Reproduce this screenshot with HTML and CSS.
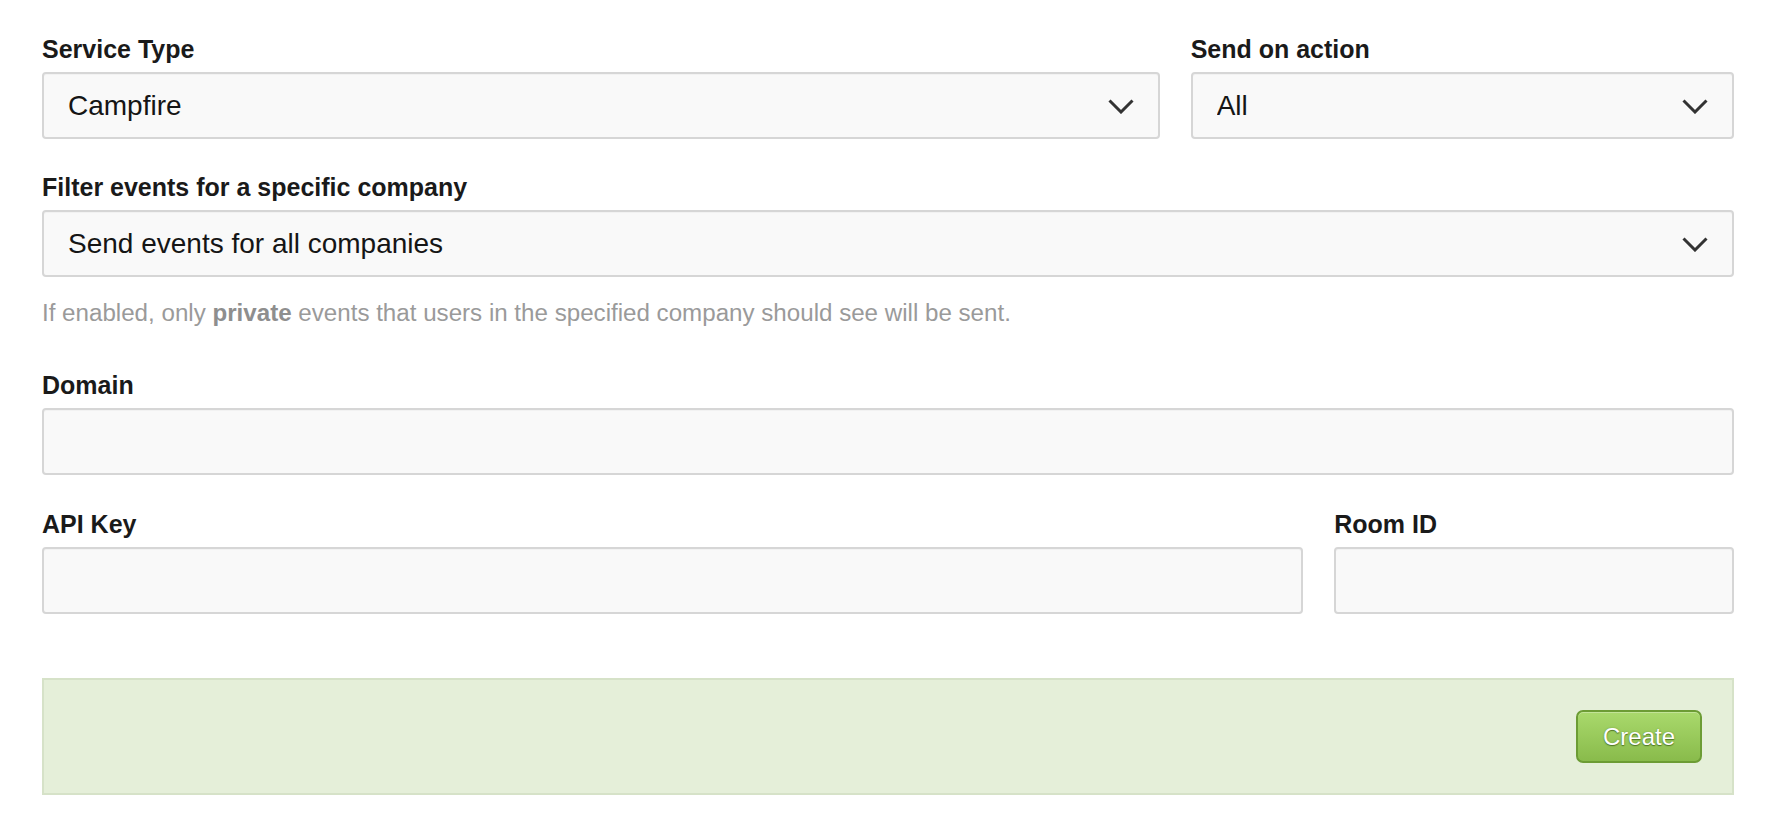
FILE: index.html
```html
<!DOCTYPE html>
<html lang="en">
<head>
    <meta charset="UTF-8">
    <meta name="viewport" content="width=device-width, initial-scale=1.0">
    <title>New Service Hook</title>
    <link rel="stylesheet" href="styles.css">
</head>
<body>
    <form class="service-form" action="#" method="post">
        <div class="row">
            <div class="field col-8">
                <label for="service-type">Service Type</label>
                <div class="select-wrap">
                    <select id="service-type" name="service-type">
                        <option>Campfire</option>
                    </select>
                    <svg class="chevron" viewBox="0 0 26 15"><path d="M1.5 1.5 L13 13 L24.5 1.5"/></svg>
                </div>
            </div>
            <div class="field col-4">
                <label for="send-on">Send on action</label>
                <div class="select-wrap">
                    <select id="send-on" name="send-on">
                        <option>All</option>
                    </select>
                    <svg class="chevron" viewBox="0 0 26 15"><path d="M1.5 1.5 L13 13 L24.5 1.5"/></svg>
                </div>
            </div>
        </div>

        <div class="field filter">
            <label for="company">Filter events for a specific company</label>
            <div class="select-wrap">
                <select id="company" name="company">
                    <option>Send events for all companies</option>
                </select>
                <svg class="chevron" viewBox="0 0 26 15"><path d="M1.5 1.5 L13 13 L24.5 1.5"/></svg>
            </div>
            <p class="help">If enabled, only <strong>private</strong> events that users in the specified company should see will be sent.</p>
        </div>

        <div class="field domain">
            <label for="domain">Domain</label>
            <input type="text" id="domain" name="domain">
        </div>

        <div class="row keys">
            <div class="field col-9">
                <label for="api-key">API Key</label>
                <input type="text" id="api-key" name="api-key">
            </div>
            <div class="field col-3">
                <label for="room-id">Room ID</label>
                <input type="text" id="room-id" name="room-id">
            </div>
        </div>

        <div class="form-actions">
            <button type="submit">Create</button>
        </div>
    </form>
</body>
</html>
```

FILE: styles.css
```css
/* Formulario de servicio */
body {
    font-family: 'Liberation Sans', Arial, Helvetica, sans-serif;
    background-color: #fff;
    color: #111;
    margin: 0;
    padding: 34px 36px 0 42px;
}
.row {
    display: grid;
    grid-template-columns: repeat(12, 1fr);
    column-gap: 31px;
}
.col-8 { grid-column: span 8; }
.col-4 { grid-column: span 4; }
.col-9 { grid-column: span 9; }
.col-3 { grid-column: span 3; }

.field label {
    display: block;
    font-size: 25px;
    font-weight: bold;
    line-height: 30px;
    margin-bottom: 8px;
    color: #1a1a1a;
}
.field.filter {
    margin-top: 33px;
}
.field.domain {
    margin-top: 42px;
}
.row.keys {
    margin-top: 34px;
}
.select-wrap {
    position: relative;
}
.field select, .field input {
    display: block;
    width: 100%;
    height: 67px;
    box-sizing: border-box;
    margin: 0;
    padding: 0 60px 0 24px;
    border: 2px solid #d6d6d6;
    border-radius: 4px;
    background-color: #f9f9f9;
    font-family: inherit;
    font-size: 28px;
    color: #151515;
    outline: none;
    appearance: none;
    -webkit-appearance: none;
    box-shadow: inset 0 1px 1px rgba(0, 0, 0, 0.03);
}
.chevron {
    position: absolute;
    right: 26px;
    top: 50%;
    width: 26px;
    height: 15px;
    margin-top: -7px;
    fill: none;
    stroke: #333;
    stroke-width: 3;
    pointer-events: none;
}
.help {
    margin: 21px 0 0;
    font-size: 24.15px;
    line-height: 30px;
    color: #9a9a9a;
}
.help strong {
    color: #8e8e8e;
}
.form-actions {
    margin-top: 64px;
    background-color: #e5efd9;
    border: 2px solid #d6e2c8;
    padding: 30px 30px;
    display: flex;
    justify-content: flex-end;
}
.form-actions button {
    width: 126px;
    height: 53px;
    box-sizing: border-box;
    border: 2px solid #6c9c34;
    border-radius: 7px;
    background: linear-gradient(to bottom, #a9d96c, #89bb4b);
    color: #fff;
    font-family: inherit;
    font-size: 24px;
    text-shadow: 0 1px 1px rgba(30, 60, 0, 0.55), 0 0 2px rgba(30, 60, 0, 0.3);
    box-shadow: inset 0 1px 0 rgba(255, 255, 255, 0.3);
    cursor: pointer;
}
```
